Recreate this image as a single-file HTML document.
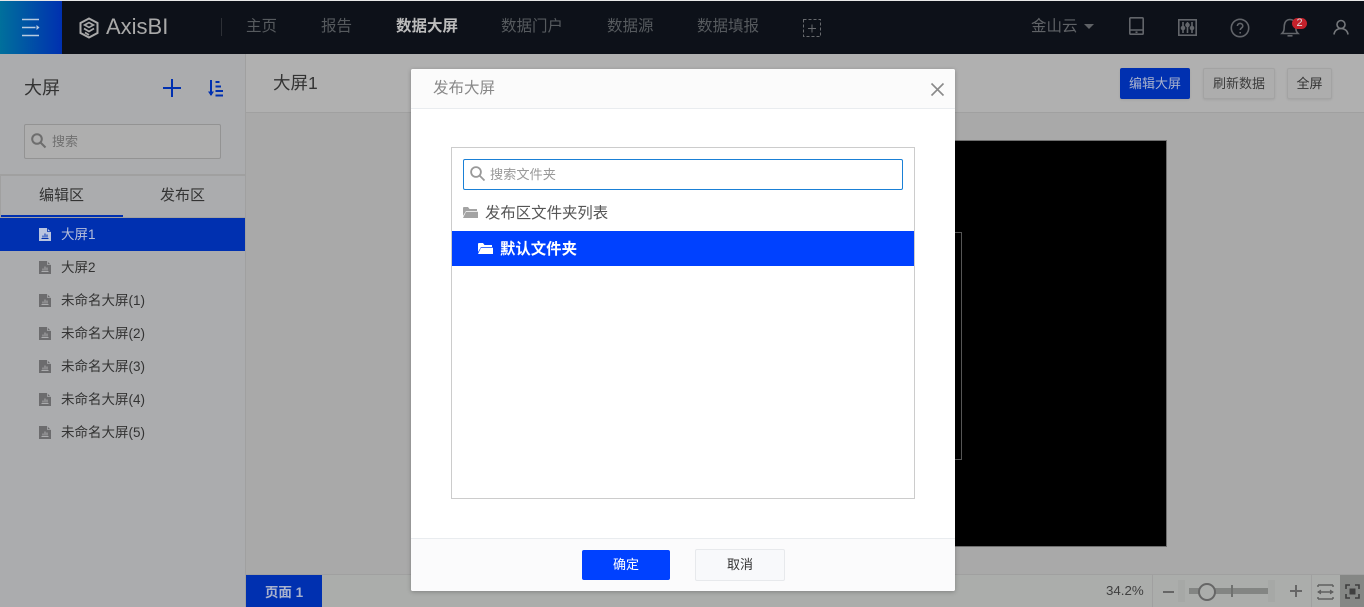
<!DOCTYPE html>
<html lang="zh"><head><meta charset="utf-8"><title>AxisBI</title>
<style>
html,body{margin:0;padding:0;width:1364px;height:607px;overflow:hidden}
body{position:relative;background:#a9a9a9;font-family:"Liberation Sans","Noto Sans CJK SC",sans-serif;font-size:14px;color:#333}
.a{position:absolute;white-space:nowrap}
svg{position:absolute;overflow:visible}
.nav{top:18px;font-size:15.5px;line-height:18px;color:#565a5e}
.item{left:61px;font-size:13.5px;line-height:18px;color:#333}
.btn{box-sizing:border-box;height:31px;top:68px;border-radius:2px;text-align:center;line-height:29px;font-size:13px;border:1px solid #a3a3a3;background:#adadad;color:#3b3b3b;box-shadow:0 1px 2px rgba(0,0,0,.08)}
</style></head><body>

<!-- top bar -->
<div class="a" style="left:0;top:0;width:1364px;height:1px;background:#e8e8e8"></div>
<div class="a" style="left:0;top:1px;width:1364px;height:53px;background:#0d1119"></div>
<div class="a" style="left:0;top:1px;width:62px;height:53px;background:linear-gradient(90deg,#00709c,#0030b0)"></div>
<svg style="left:22px;top:19px" width="18" height="18" fill="none" stroke="#b9cbe0" stroke-width="1.6"><path d="M0 .5H17M0 8.500H13.500M0 16.500H17"/><path d="M14.500 6L17.500 8.500L14.500 11Z" stroke="none" fill="#b9cbe0"/></svg>
<svg style="left:79px;top:17px" width="20" height="22" viewBox="0 0 20 22" fill="none" stroke="#a9a9a9" stroke-width="2"><path d="M10 1.500L18.500 6V16L10 20.500L1.500 16V6Z"/><path d="M5.500 8L10 5.500L14.500 8L10 10.500Z" stroke-width="1.600"/><path d="M5 11.500L10 14.500L15 11.500M6 15.500L10 18" stroke-width="1.800"/></svg>
<div class="a" style="left:106px;top:13px;font-size:22px;line-height:28px;color:#a9a9a9">AxisBI</div>
<div class="a" style="left:221px;top:18px;width:1px;height:18px;background:#2d3036"></div>
<div class="a nav" style="left:246px">主页</div>
<div class="a nav" style="left:321px">报告</div>
<div class="a nav" style="left:396px;color:#bcbcbc;font-weight:bold">数据大屏</div>
<div class="a nav" style="left:501px">数据门户</div>
<div class="a nav" style="left:607px">数据源</div>
<div class="a nav" style="left:697px">数据填报</div>
<svg style="left:803px;top:19px" width="18" height="18" fill="none" stroke="#686a6e"><rect x=".5" y=".5" width="17" height="17" stroke-dasharray="3 2"/><path d="M5 9.500H13M9 5.500V13.500"/></svg>
<div class="a nav" style="left:1031px;top:18px;color:#5f6266">金山云</div>
<svg style="left:1084px;top:24px" width="10" height="5"><path d="M0 0H10L5 5Z" fill="#5f6266"/></svg>
<svg style="left:1129px;top:17px" width="15" height="18" fill="none" stroke="#62656a" stroke-width="1.600"><rect x=".8" y=".8" width="13.400" height="16.400" rx="1"/><path d="M1 13H14M6.500 15.200H8.500"/></svg>
<svg style="left:1178px;top:19px" width="19" height="17" fill="none" stroke="#62656a" stroke-width="1.600"><rect x=".8" y=".8" width="17.400" height="15.400"/><path d="M5 3V14M9.500 3V14M14 3V14"/><circle cx="5" cy="9" r="1.500" fill="#62656a"/><circle cx="9.500" cy="6" r="1.500" fill="#62656a"/><circle cx="14" cy="9" r="1.500" fill="#62656a"/></svg>
<svg style="left:1230px;top:18px" width="20" height="20" fill="none" stroke="#62656a" stroke-width="1.600"><circle cx="10" cy="10" r="8.700"/><path d="M7.400 8c0-3.400 5.400-3.400 5.400 0 0 2-2.600 2-2.600 4"/><path d="M10.200 14v1.500"/></svg>
<svg style="left:1281px;top:18px" width="18" height="19" fill="none" stroke="#62656a" stroke-width="1.600"><path d="M1 15.500C3.500 13 3 11 3.300 7.500C3.700 3 6.500 1.500 9 1.500S14.300 3 14.700 7.500C15 11 14.500 13 17 15.500Z"/><path d="M6.500 17.800H11.500"/></svg>
<div class="a" style="left:1292px;top:18px;width:15px;height:11px;border-radius:6px;background:#c4212b;color:#ddd;font-size:11px;line-height:11px;text-align:center">2</div>
<svg style="left:1333px;top:19px" width="16" height="16" fill="none" stroke="#75787c" stroke-width="1.600"><circle cx="8" cy="5.500" r="4"/><path d="M1 15.500C1.500 11.500 4.500 9.500 8 9.500S14.500 11.500 15 15.500"/></svg>

<!-- sidebar -->
<div class="a" style="left:0;top:54px;width:245px;height:553px;background:#abacae"></div>
<div class="a" style="left:245px;top:54px;width:1px;height:553px;background:#a0a0a0"></div>
<div class="a" style="left:24px;top:77px;font-size:18px;line-height:22px;color:#333">大屏</div>
<svg style="left:163px;top:79px" width="18" height="18" stroke="#0030b0" stroke-width="2" fill="none"><path d="M0 9H18M9 0V18"/></svg>
<svg style="left:208px;top:80px" width="16" height="17" stroke="#0030b0" stroke-width="2" fill="none"><path d="M3 0V15"/><path d="M0 11.500H6L3 16Z" fill="#0030b0" stroke="none"/><path d="M7.500 2H11.500M7.500 6.500H13M7.500 11H15M7.500 15.500H15"/></svg>
<div class="a" style="left:24px;top:124px;width:197px;height:35px;box-sizing:border-box;border:1px solid #939393;border-radius:2px;background:#aeaeae"></div>
<svg style="left:31px;top:133px" width="15" height="15" fill="none" stroke="#6e6e6e" stroke-width="2"><circle cx="6" cy="6" r="4.800"/><path d="M9.500 9.500L14.500 14.500"/></svg>
<div class="a" style="left:52px;top:133px;font-size:13px;line-height:18px;color:#707070">搜索</div>
<div class="a" style="left:0;top:174px;width:245px;height:2px;background:#a0a0a0"></div>
<div class="a" style="left:0;top:176px;width:245px;height:42px;box-sizing:border-box;border:1px solid #a0a0a0;border-top:0;border-right:0"></div>
<div class="a" style="left:39px;top:186px;font-size:15px;line-height:20px;color:#333">编辑区</div>
<div class="a" style="left:160px;top:186px;font-size:15px;line-height:20px;color:#333">发布区</div>
<div class="a" style="left:1px;top:215px;width:122px;height:2px;background:#0030b0"></div>
<div class="a" style="left:0;top:218px;width:245px;height:33px;background:#0030b0"></div>

<svg width="0" height="0" style="left:0;top:0"><defs><symbol id="doc" viewBox="0 0 12 13"><path d="M0 0H8L12 4V13H0Z" fill="currentColor"/><path d="M8.500 0V3.500H12" fill="none" style="stroke:var(--c)" stroke-width=".8"/><path d="M2.500 10.500H9.500M4 9.500V7.500M6 9.500V5.500M8 9.500V6.500" style="stroke:var(--c)" fill="none"/></symbol><symbol id="fold" viewBox="0 0 15 11"><path d="M0 1C0 .4.400 0 1 0H5L6.500 2H14V4H3L0 9Z" fill="currentColor"/><path d="M0 11L3 4.800H15V11Z" fill="currentColor"/></symbol></defs></svg>

<svg style="left:39px;top:228px;color:#b9c4df;--c:#0030b0" width="12" height="13"><use href="#doc"/></svg>
<div class="a item" style="top:226px;color:#b6bfda">大屏1</div>
<svg style="left:39px;top:261px;color:#6c6c6e;--c:#abacae" width="12" height="13"><use href="#doc"/></svg>
<div class="a item" style="top:259px">大屏2</div>
<svg style="left:39px;top:294px;color:#6c6c6e;--c:#abacae" width="12" height="13"><use href="#doc"/></svg>
<div class="a item" style="top:292px">未命名大屏(1)</div>
<svg style="left:39px;top:327px;color:#6c6c6e;--c:#abacae" width="12" height="13"><use href="#doc"/></svg>
<div class="a item" style="top:325px">未命名大屏(2)</div>
<svg style="left:39px;top:360px;color:#6c6c6e;--c:#abacae" width="12" height="13"><use href="#doc"/></svg>
<div class="a item" style="top:358px">未命名大屏(3)</div>
<svg style="left:39px;top:393px;color:#6c6c6e;--c:#abacae" width="12" height="13"><use href="#doc"/></svg>
<div class="a item" style="top:391px">未命名大屏(4)</div>
<svg style="left:39px;top:426px;color:#6c6c6e;--c:#abacae" width="12" height="13"><use href="#doc"/></svg>
<div class="a item" style="top:424px">未命名大屏(5)</div>

<!-- header -->
<div class="a" style="left:246px;top:54px;width:1118px;height:58px;background:#b0b0b0"></div>
<div class="a" style="left:246px;top:112px;width:1118px;height:1px;background:#a0a0a0"></div>
<div class="a" style="left:273px;top:72px;font-size:17.500px;line-height:22px;color:#333">大屏1</div>
<div class="a btn" style="left:1120px;width:70px;background:#0030b0;border-color:#0030b0;color:#a9b2cd">编辑大屏</div>
<div class="a btn" style="left:1203px;width:72px">刷新数据</div>
<div class="a btn" style="left:1287px;width:45px;color:#333">全屏</div>

<!-- canvas -->
<div class="a" style="left:900px;top:140px;width:267px;height:407px;box-sizing:border-box;background:#000;border:1px solid #6e6e6e"></div>
<div class="a" style="left:900px;top:232px;width:62px;height:228px;box-sizing:border-box;border:1px solid #555"></div>

<!-- bottom bar -->
<div class="a" style="left:246px;top:574px;width:1118px;height:1px;background:#a0a0a0"></div>
<div class="a" style="left:246px;top:575px;width:1118px;height:32px;background:#abadab"></div>
<div class="a" style="left:246px;top:575px;width:76px;height:32px;background:#0030b0;color:#a9b2cd;text-align:center;font-size:13.500px;font-weight:bold;line-height:35px">页面 1</div>
<div class="a" style="left:1106px;top:582px;font-size:13.300px;line-height:18px;color:#404040">34.2%</div>
<div class="a" style="left:1152px;top:575px;width:1px;height:32px;background:#a0a0a0"></div>
<div class="a" style="left:1311px;top:575px;width:1px;height:32px;background:#a0a0a0"></div>
<div class="a" style="left:1163px;top:591px;width:11px;height:2px;background:#666"></div>
<div class="a" style="left:1178px;top:580px;width:7px;height:22px;background:#a6a8a6"></div>
<div class="a" style="left:1268px;top:580px;width:7px;height:22px;background:#a6a8a6"></div>
<div class="a" style="left:1189px;top:588px;width:79px;height:6px;background:#838583"></div>
<div class="a" style="left:1231px;top:585px;width:2px;height:12px;background:#6f716f"></div>
<div class="a" style="left:1198px;top:583px;width:18px;height:18px;box-sizing:border-box;border:2px solid #666;border-radius:50%;background:#abadab"></div>
<svg style="left:1290px;top:585px" width="12" height="12" stroke="#666" stroke-width="2"><path d="M0 6H12M6 0V12"/></svg>
<svg style="left:1317px;top:584px" width="17" height="16" fill="none" stroke="#606060" stroke-width="1.500"><path d="M1 1H16M1 15H16M1 8H16" /><path d="M4 6L1 8L4 10M13 6L16 8L13 10" fill="#606060" stroke-width="1"/><path d="M1 1V3M16 1V3M1 15V13M16 15V13"/></svg>
<div class="a" style="left:1340px;top:575px;width:24px;height:32px;background:#858785"></div>
<svg style="left:1345px;top:584px" width="15" height="15" fill="none" stroke="#3f3f3f" stroke-width="1.600"><path d="M5 1H1V5M10 1H14V5M5 14H1V10M10 14H14V10"/><rect x="4.500" y="4.500" width="6" height="6" fill="#3f3f3f" stroke="none"/></svg>

<!-- dialog -->
<div class="a" style="left:411px;top:69px;width:544px;height:522px;background:#fff;border-radius:2px;box-shadow:0 1px 4px rgba(0,0,0,.25)"></div>
<div class="a" style="left:411px;top:69px;width:544px;height:39px;background:#fbfbfb;border-radius:2px 2px 0 0;border-bottom:1px solid #e9ecef"></div>
<div class="a" style="left:433px;top:79px;font-size:15.500px;line-height:20px;color:#888">发布大屏</div>
<svg style="left:931px;top:83px" width="13" height="13" stroke="#8a8a8a" stroke-width="1.600"><path d="M.5 .5L12.500 12.500M12.500 .5L.5 12.500"/></svg>

<div class="a" style="left:451px;top:147px;width:464px;height:352px;box-sizing:border-box;border:1px solid #ccc"></div>
<div class="a" style="left:463px;top:159px;width:440px;height:31px;box-sizing:border-box;border:1px solid #1a80d6;border-radius:2px"></div>
<svg style="left:470px;top:166px" width="15" height="15" fill="none" stroke="#999" stroke-width="1.800"><circle cx="6" cy="6" r="4.900"/><path d="M9.500 9.500L14.500 14.500"/></svg>
<div class="a" style="left:490px;top:166px;font-size:13.200px;line-height:18px;color:#999">搜索文件夹</div>
<svg style="left:463px;top:207px;color:#a3a3a3" width="15" height="11"><use href="#fold"/></svg>
<div class="a" style="left:485px;top:204px;font-size:15.400px;line-height:20px;color:#555">发布区文件夹列表</div>
<div class="a" style="left:452px;top:231px;width:462px;height:35px;background:#0041ff"></div>
<svg style="left:478px;top:243px;color:#fff" width="15" height="11"><use href="#fold"/></svg>
<div class="a" style="left:500px;top:240px;font-size:15.400px;line-height:20px;color:#fff;font-weight:bold">默认文件夹</div>

<div class="a" style="left:411px;top:538px;width:544px;height:53px;box-sizing:border-box;background:#fbfbfc;border-top:1px solid #e9ecef;border-radius:0 0 2px 2px"></div>
<div class="a" style="left:582px;top:550px;width:88px;height:30px;background:#0041ff;border-radius:2px;color:#fff;text-align:center;font-size:13px;line-height:29px">确定</div>
<div class="a" style="left:695px;top:549px;width:90px;height:32px;box-sizing:border-box;background:#f8f9fb;border:1px solid #e7e9ec;border-radius:2px;color:#333;text-align:center;font-size:13px;line-height:29px">取消</div>

</body></html>
